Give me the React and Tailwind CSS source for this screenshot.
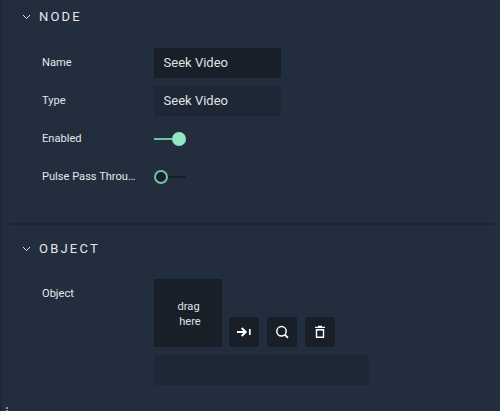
import React from "react";

function Section({ title, children, className = "" }) {
  return (
    <section className={className}>
      <div className="flex h-[34px] items-center pl-5">
        <svg width="9" height="6" viewBox="0 0 9 6" fill="none" stroke="#dfe3e8" strokeWidth="1">
          <path d="M1 1 L4.5 4.6 L8 1" />
        </svg>
        <h2 className="ml-[8px] text-[13px] leading-[18px] tracking-[2.2px] text-[#e4e7eb]">{title}</h2>
      </div>
      {children}
    </section>
  );
}

function Row({ label, children }) {
  return (
    <div className="flex h-[30px] items-center pl-10">
      <div className="w-[111.6px] shrink-0 text-[11.1px] leading-[16px] text-[#e4e7eb]">{label}</div>
      {children}
    </div>
  );
}

function Toggle({ on }) {
  return (
    <div className="flex w-8 items-center">
      {on ? (
        <>
          <div className="h-[2px] flex-1 bg-[#6cc5a3]" />
          <div className="size-[14px] rounded-full bg-[#92e6c5]" />
        </>
      ) : (
        <>
          <div className="size-[14px] rounded-full border-2 border-[#6fc3a4] bg-[#19202a]" />
          <div className="h-[2px] flex-1 bg-[#19202a]" />
        </>
      )}
    </div>
  );
}

function IconButton({ children }) {
  return (
    <button className="flex size-[30px] items-center justify-center rounded-[2px] bg-[#181f28] text-white">
      {children}
    </button>
  );
}

export default function App() {
  return (
    <div className="relative h-[411px] w-[500px] overflow-hidden border-l-2 border-[#1e2734] bg-[#222d3d] font-['Roboto',sans-serif]">
      <Section title="NODE">
        <div className="mt-[14px] flex flex-col gap-2">
          <Row label="Name">
            <div className="flex h-[30px] w-[127.6px] items-center rounded-[1px] bg-[#181f28] pl-[10px] text-[13px] text-[#dfe2e6]">Seek Video</div>
          </Row>
          <Row label="Type">
            <div className="flex h-[30px] w-[127.6px] items-center rounded-[1px] bg-[#1e2735] pl-[10px] text-[13px] text-[#dfe2e6]">Seek Video</div>
          </Row>
          <Row label="Enabled"><Toggle on /></Row>
          <Row label="Pulse Pass Throu…"><Toggle /></Row>
        </div>
      </Section>
      <div className="mt-[31px] mr-[5px] ml-2 h-[2px] bg-[#1c2633]" />
      <Section title="OBJECT" className="mt-[7px]">
        <div className="mt-[13px] flex pl-10">
          <div className="flex h-[31px] w-[111.6px] shrink-0 items-center text-[11.1px] text-[#e4e7eb]">Object</div>
          <div className="flex flex-col gap-2">
            <div className="flex items-end gap-[7.8px]">
              <div className="flex size-[68px] items-center justify-center rounded-[2px] bg-[#181f28] pt-[2px] pl-[2px] text-center text-[11.1px] leading-[15px] text-[#dfe2e6]">
                <span>drag<br />&nbsp;here</span>
              </div>
              <IconButton>
                <svg width="16" height="12" viewBox="0 0 16 12" fill="none" stroke="currentColor" strokeWidth="2">
                  <path d="M1 6 H9.5 M5.7 2 L9.7 6 L5.7 10" />
                  <path d="M13.8 3 V9" strokeWidth="1.7" />
                </svg>
              </IconButton>
              <IconButton>
                <svg width="14" height="14" viewBox="0 0 14 14" fill="none" stroke="currentColor" strokeWidth="1.5">
                  <circle cx="6.5" cy="6.3" r="4.7" />
                  <path d="M9.8 9.6 L13 12.8" strokeWidth="1.8" />
                </svg>
              </IconButton>
              <IconButton>
                <svg width="12" height="14" viewBox="0 0 12 14" fill="none" stroke="currentColor" strokeWidth="1.4">
                  <path d="M1 2.4 H11 M4 1.4 H8" />
                  <path d="M2.5 4.7 H9.5 V12.2 H2.5 Z" />
                </svg>
              </IconButton>
            </div>
            <div className="h-[30px] w-[215.6px] rounded-[1px] bg-[#1e2735]" />
          </div>
        </div>
      </Section>
      <div className="absolute bottom-0 left-1 flex flex-col gap-px">
        <div className="h-[2px] w-[2px] bg-[#8d959f]" />
        <div className="h-px w-[2px] bg-[#8d959f]" />
      </div>
    </div>
  );
}
